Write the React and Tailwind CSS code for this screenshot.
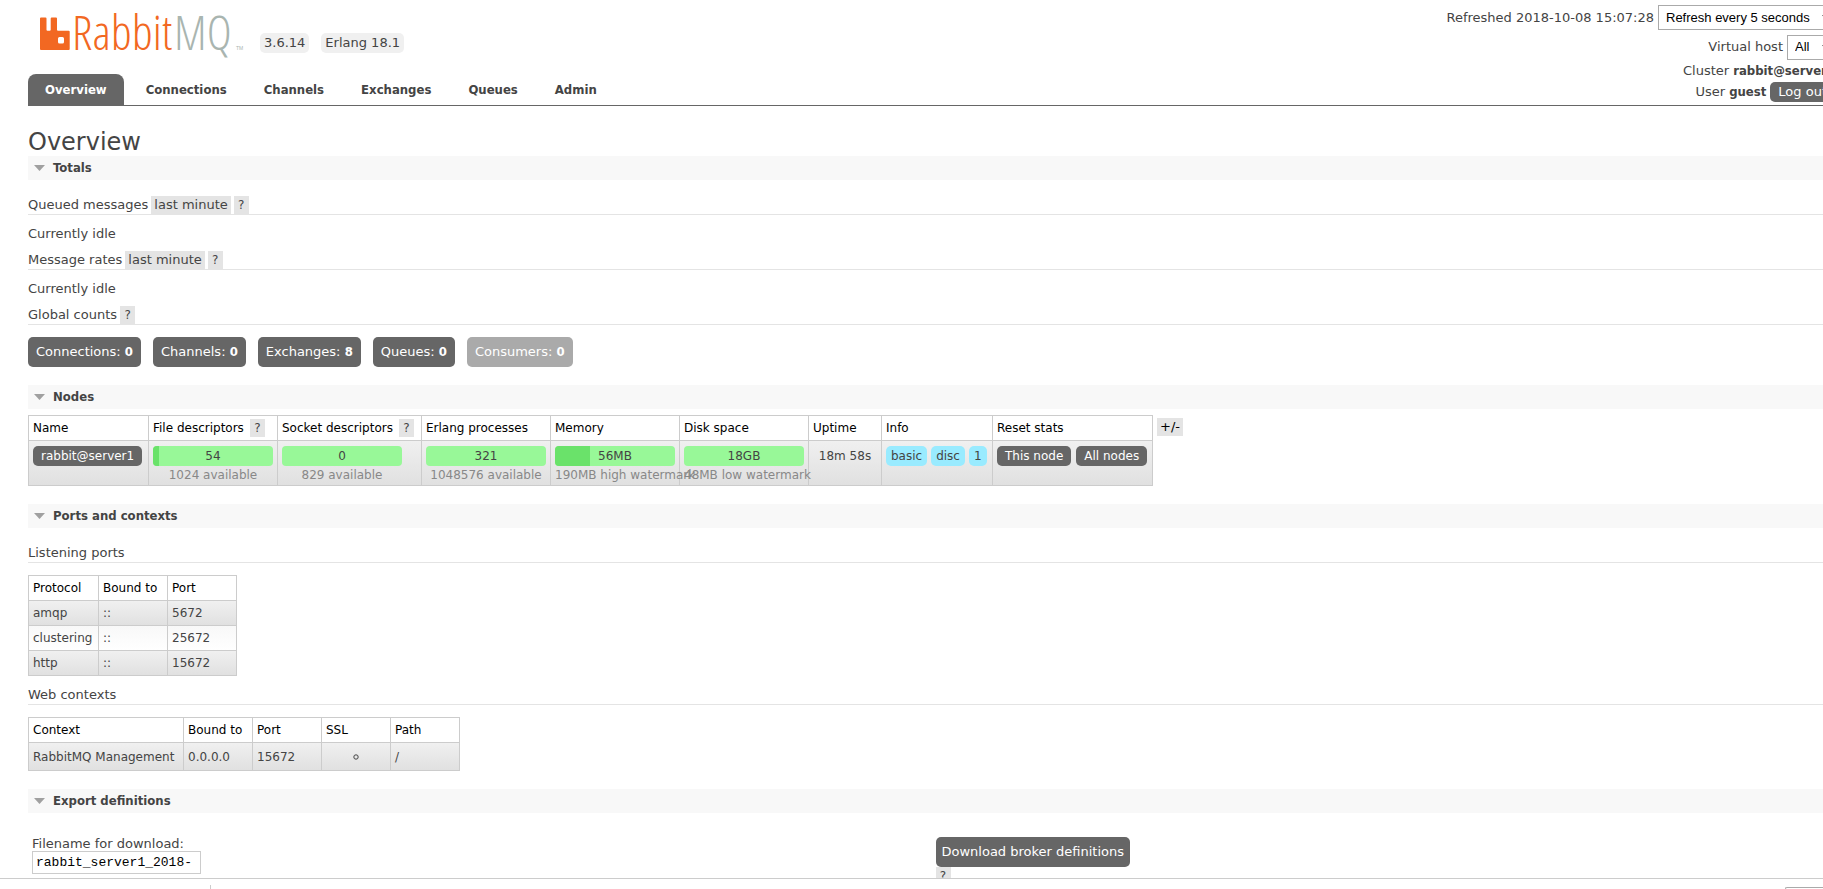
import React from "react";

const TABS = ["Overview", "Connections", "Channels", "Exchanges", "Queues", "Admin"];

const COUNTS = [
  { label: "Connections", value: 0 },
  { label: "Channels", value: 0 },
  { label: "Exchanges", value: 8 },
  { label: "Queues", value: 0 },
  { label: "Consumers", value: 0, disabled: true },
];

const CELL = "border border-[#ccc] px-1 align-top";
const HEAD = "h-[25px] border border-[#ccc] px-1 text-left font-normal text-black";
const SHADED = "bg-linear-to-b from-[#f0f0f0] to-[#e0e0e0]";
const BOLD = "font-['DejaVu_Sans_Condensed','DejaVu_Sans',sans-serif] font-bold";

function Logo() {
  return (
    <svg width="204" height="48" viewBox="0 0 204 48" className="overflow-visible" role="img" aria-label="RabbitMQ">
      <path
        fill="#f26822"
        fillRule="evenodd"
        d="M1 7.500h4.500q1 0 1 1v11.200q0 1 1 1h2.200q1 0 1-1V8.500q0-1 1-1h4.300q1 0 1 1v11.200q0 1 1 1h10.700q1 0 1 1V39q0 1-1 1H1q-1 0-1-1V8.500q0-1 1-1zM19.500 27q-1.500 0-1.500 1.500v3.500q0 1.500 1.500 1.500h3q1.500 0 1.500-1.500v-3.500q0-1.500-1.500-1.500z"
      />
      <text y="40" fontSize="48" fontFamily="'Open Sans Condensed Light','Liberation Sans Narrow',sans-serif">
        <tspan x="32" fill="#f26822">Rabbit</tspan>
        <tspan x="134" fill="#a9b5b0">MQ</tspan>
      </text>
      <text x="196" y="40" fontSize="5" fontFamily="'Liberation Sans',sans-serif" fill="#a9b5b0">TM</text>
    </svg>
  );
}

function Help() {
  return (
    <button type="button" className="h-[18px] w-[15px] bg-[#e4e4e4] text-center text-[12px] leading-[18px] text-[#444]">
      ?
    </button>
  );
}

function Section({ title, children }) {
  return (
    <section className="mb-[18px]">
      <h2 className="h-6 bg-[#f8f8f8]">
        <button type="button" className={`flex h-6 w-full items-center gap-2 pl-1.5 text-left text-[13px] ${BOLD}`}>
          <svg width="11" height="6" viewBox="0 0 11 6" aria-hidden="true">
            <path d="M0 0h11L5.500 6z" fill="#a0a0a0" />
          </svg>
          {title}
        </button>
      </h2>
      {children}
    </section>
  );
}

function SubHead({ title, range, help }) {
  return (
    <h3 className="flex h-[19px] items-center gap-[3px] border-b border-[#e4e4e4] leading-[18px]">
      {title}
      {range && (
        <button type="button" className="h-[18px] bg-[#e4e4e4] px-[3px] leading-[18px]">
          {range}
        </button>
      )}
      {help && <Help />}
    </h3>
  );
}

function Bar({ value, note, percent }) {
  return (
    <td className={CELL}>
      <div className="mt-[5px] w-[120px]">
        <div className="relative h-5 overflow-hidden rounded bg-[#98f898] text-center leading-5">
          <div className="absolute inset-y-0 left-0 bg-[#6ae26a]" style={{ width: `${percent}%` }} />
          <span className="relative">{value}</span>
        </div>
        <div className="h-[19px] whitespace-nowrap text-center leading-[18px] text-[#888]">{note}</div>
      </div>
    </td>
  );
}

function Pill({ children }) {
  return <abbr className="h-5 rounded-[5px] bg-[#99ebff] px-[5px] leading-5 no-underline">{children}</abbr>;
}

function SmallButton({ children }) {
  return (
    <button type="button" className="h-5 whitespace-nowrap rounded-[5px] bg-[#666] px-2 leading-5 text-white">
      {children}
    </button>
  );
}

function DropDown({ id, option }) {
  return (
    <span className="flex h-[25px] items-center border border-[#aaa] bg-white pr-1">
      <select id={id} className="h-full appearance-none bg-white pl-[7px] pr-3 font-['Liberation_Sans',sans-serif] text-[13px] text-black">
        <option>{option}</option>
      </select>
      <svg width="8" height="5" viewBox="0 0 8 5" aria-hidden="true">
        <path d="M0 0h8L4 5z" fill="#444" />
      </svg>
    </span>
  );
}

function Header() {
  return (
    <header className="flex items-stretch justify-between border-b border-[#666]">
      <div className="flex flex-col justify-between">
        <div className="flex items-start pl-3 pt-2.5">
          <a href="#overview">
            <Logo />
          </a>
          <div className="mt-[23px] flex gap-3 pl-4">
            <abbr className="h-5 rounded-[5px] bg-[#f0f0f0] px-1 leading-5">3.6.14</abbr>
            <abbr className="h-5 rounded-[5px] bg-[#f0f0f0] px-1 leading-5">Erlang 18.1</abbr>
          </div>
        </div>
        <nav className={`flex gap-[7px] text-[13px] ${BOLD}`}>
          {TABS.map((tab) => (
            <a
              key={tab}
              href={`#${tab.toLowerCase()}`}
              className={
                tab === "Overview"
                  ? "h-[31px] rounded-t-lg bg-[#666] px-[17px] leading-[32px] text-white"
                  : "h-[31px] px-[15px] leading-[32px]"
              }
            >
              {tab}
            </a>
          ))}
        </nav>
      </div>
      <ul className="flex flex-col items-end pb-[3px] pt-[5px]">
        <li className="mb-1 flex items-center gap-1">
          <label htmlFor="refresh">Refreshed 2018-10-08 15:07:28</label>
          <DropDown id="refresh" option="Refresh every 5 seconds" />
        </li>
        <li className="flex h-[26px] items-center gap-1">
          <label htmlFor="vhost">Virtual host</label>
          <DropDown id="vhost" option="All" />
        </li>
        <li className="flex h-[22px] items-center gap-1">
          Cluster <b className={BOLD}>rabbit@server1</b>
        </li>
        <li className="flex h-5 items-center gap-1">
          User <b className={BOLD}>guest</b> <SmallButton>Log out</SmallButton>
        </li>
      </ul>
    </header>
  );
}

function NodesTable() {
  return (
    <div className="mt-1.5 flex items-start gap-1">
      <table className="border-collapse text-[12px]">
        <thead>
          <tr>
            <th className={`${HEAD} min-w-[120px]`}>Name</th>
            <th className={HEAD}>
              <span className="flex items-center gap-1.5">File descriptors <Help /></span>
            </th>
            <th className={`${HEAD} min-w-[144px]`}>
              <span className="flex items-center gap-1.5">Socket descriptors <Help /></span>
            </th>
            <th className={HEAD}>Erlang processes</th>
            <th className={HEAD}>Memory</th>
            <th className={HEAD}>Disk space</th>
            <th className={`${HEAD} min-w-[73px]`}>Uptime</th>
            <th className={`${HEAD} min-w-[111px]`}>Info</th>
            <th className={`${HEAD} min-w-[160px]`}>Reset stats</th>
          </tr>
        </thead>
        <tbody>
          <tr className={SHADED}>
            <td className={CELL}>
              <div className="mt-[5px] flex"><SmallButton>rabbit@server1</SmallButton></div>
            </td>
            <Bar value="54" note="1024 available" percent={5} />
            <Bar value="0" note="829 available" percent={0} />
            <Bar value="321" note="1048576 available" percent={0} />
            <Bar value="56MB" note="190MB high watermark" percent={29} />
            <Bar value="18GB" note="48MB low watermark" percent={0} />
            <td className={CELL}>
              <div className="mt-[5px] whitespace-nowrap text-center leading-5">18m 58s</div>
            </td>
            <td className={CELL}>
              <div className="mt-[5px] flex gap-1">
                <Pill>basic</Pill>
                <Pill>disc</Pill>
                <Pill>1</Pill>
              </div>
            </td>
            <td className={CELL}>
              <div className="mt-[5px] flex gap-[5px]">
                <SmallButton>This node</SmallButton>
                <SmallButton>All nodes</SmallButton>
              </div>
            </td>
          </tr>
        </tbody>
      </table>
      <button type="button" className="mt-[3px] h-[18px] bg-[#e4e4e4] px-[3px] leading-[18px] text-black">+/-</button>
    </div>
  );
}

function PortsTable() {
  const rows = [
    ["amqp", "::", "5672"],
    ["clustering", "::", "25672"],
    ["http", "::", "15672"],
  ];
  return (
    <table className="mt-3 border-collapse text-[12px]">
      <thead>
        <tr>
          <th className={`${HEAD} min-w-[70px]`}>Protocol</th>
          {["Bound to", "Port"].map((name) => (
            <th key={name} className={`${HEAD} min-w-[69px]`}>{name}</th>
          ))}
        </tr>
      </thead>
      <tbody>
        {rows.map((row, index) => (
          <tr key={row[0]} className={index % 2 ? "bg-linear-to-b from-[#f8f8f8] to-white" : SHADED}>
            {row.map((value) => (
              <td key={value} className="h-[25px] border border-[#ccc] px-1">{value}</td>
            ))}
          </tr>
        ))}
      </tbody>
    </table>
  );
}

function ContextsTable() {
  return (
    <table className="mt-3 border-collapse text-[12px]">
      <thead>
        <tr>
          <th className={`${HEAD} min-w-[155px]`}>Context</th>
          {["Bound to", "Port", "SSL", "Path"].map((name) => (
            <th key={name} className={`${HEAD} min-w-[69px]`}>{name}</th>
          ))}
        </tr>
      </thead>
      <tbody>
        <tr className={SHADED}>
          <td className="h-7 border border-[#ccc] px-1">RabbitMQ Management</td>
          <td className="border border-[#ccc] px-1">0.0.0.0</td>
          <td className="border border-[#ccc] px-1">15672</td>
          <td className="border border-[#ccc] px-1 text-center">
            <svg className="inline" width="6" height="6" viewBox="0 0 6 6" role="img" aria-label="No SSL">
              <circle cx="3" cy="3" r="2.200" fill="none" stroke="#444" />
            </svg>
          </td>
          <td className="border border-[#ccc] px-1">/</td>
        </tr>
      </tbody>
    </table>
  );
}

export default function App() {
  return (
    <div className="flex h-screen flex-col overflow-hidden bg-white font-['DejaVu_Sans',sans-serif] text-[13px] leading-[18px] text-[#444]">
      <div className="w-[calc(100%+40px)] min-h-0 flex-1 overflow-hidden px-7">
        <Header />
        <main>
          <h1 className="mt-[22px] text-[24px] leading-[28px]">Overview</h1>
          <Section title="Totals">
            <div className="mt-4 flex flex-col">
              <SubHead title="Queued messages" range="last minute" help />
              <p className="mb-2 mt-2.5">Currently idle</p>
              <SubHead title="Message rates" range="last minute" help />
              <p className="mb-2 mt-2.5">Currently idle</p>
              <SubHead title="Global counts" help />
            </div>
            <div className="mt-3 flex gap-3">
              {COUNTS.map(({ label, value, disabled }) => (
                <a
                  key={label}
                  href={`#${label.toLowerCase()}`}
                  className={
                    disabled
                      ? "h-[30px] rounded-[5px] bg-[#aaa] px-2 leading-[30px] text-white"
                      : "h-[30px] rounded-[5px] bg-[#666] px-2 leading-[30px] text-white"
                  }
                >
                  {label}: <b className={BOLD}>{value}</b>
                </a>
              ))}
            </div>
          </Section>
          <Section title="Nodes">
            <NodesTable />
          </Section>
          <Section title="Ports and contexts">
            <div className="mt-4">
              <SubHead title="Listening ports" />
            </div>
            <PortsTable />
            <div className="mt-2.5">
              <SubHead title="Web contexts" />
            </div>
            <ContextsTable />
          </Section>
          <Section title="Export definitions">
            <form className="mt-6 grid grid-cols-2 pl-1" onSubmit={(event) => event.preventDefault()}>
              <div className="flex flex-col items-start">
                <label htmlFor="filename" className="leading-[14px]">Filename for download:</label>
                <input
                  id="filename"
                  type="text"
                  defaultValue="rabbit_server1_2018-"
                  className="h-[23px] w-[169px] border border-[#ccc] px-[3px] font-['Liberation_Mono',monospace] text-[13px] text-black"
                />
              </div>
              <div className="flex flex-col items-start pl-0.5">
                <button type="submit" className="h-[30px] rounded-[5px] bg-[#666] px-1.5 text-white">
                  Download broker definitions
                </button>
                <Help />
              </div>
            </form>
          </Section>
        </main>
      </div>
      <footer className="flex h-[11px] shrink-0 items-end justify-between border-t border-[#ccc]">
        <div className="h-1 w-[211px] border-r border-[#ccc]" />
        <div className="h-0.5 w-[38px] rounded-tl border-l border-t border-[#aaa]" />
      </footer>
    </div>
  );
}
